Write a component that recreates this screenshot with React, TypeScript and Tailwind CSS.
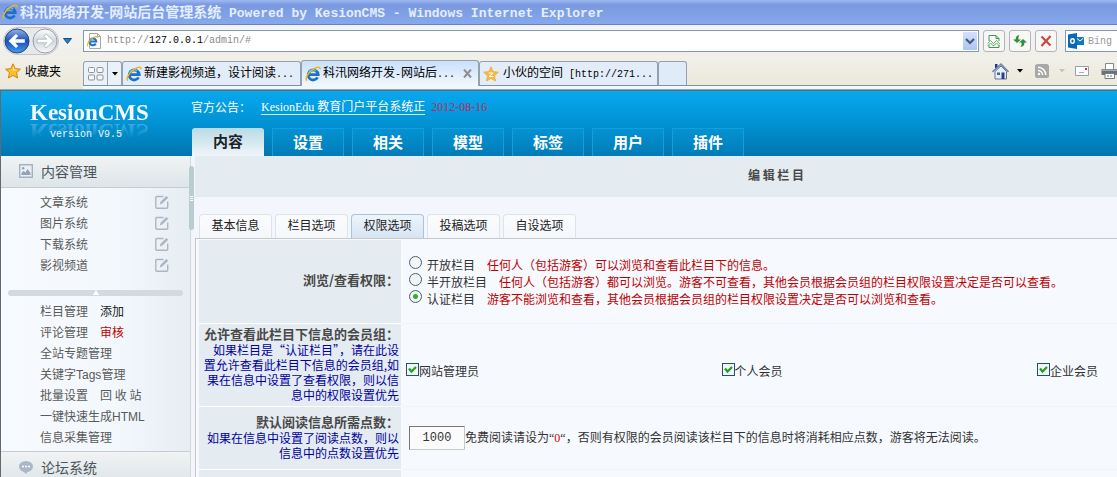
import { ReactNode } from "react";

const MONO = "font-['Liberation_Mono','Noto_Sans_CJK_SC',monospace]";
const SERIF = "font-['Liberation_Serif','Noto_Sans_CJK_SC',serif]";

const MAIN_TABS = ["内容", "设置", "相关", "模型", "标签", "用户", "插件"];
const SUB_TABS = ["基本信息", "栏目选项", "权限选项", "投稿选项", "自设选项"];
const CHANNELS = ["文章系统", "图片系统", "下载系统", "影视频道"];
const GROUPS = ["网站管理员", "个人会员", "企业会员"];

const ACCESS_OPTIONS = [
  { label: "开放栏目", hint: "任何人（包括游客）可以浏览和查看此栏目下的信息。" },
  { label: "半开放栏目", hint: "任何人（包括游客）都可以浏览。游客不可查看，其他会员根据会员组的栏目权限设置决定是否可以查看。" },
  { label: "认证栏目", hint: "游客不能浏览和查看，其他会员根据会员组的栏目权限设置决定是否可以浏览和查看。" },
];

const IeIcon = () => (
  <svg viewBox="0 0 16 16" className="h-4 w-4 shrink-0" fill="none">
    <path d="M12.6 11.4A5 5 0 1 1 13.2 8.6H4.2" stroke="#1c72c8" strokeWidth="2.8" />
    <path d="M3.8 6.600A4.400 4.400 0 0 1 11 5" stroke="#6cc4f6" strokeWidth="1.2" />
    <path d="M2 14.6C-.6 12.6 3.4 6.6 8.2 3.4 12 .8 15.6.4 15 3.4" stroke="#f0b323" strokeWidth="1.5" />
  </svg>
);

const StarIcon = ({ pale = false }: { pale?: boolean }) => (
  <svg viewBox="0 0 16 16" className="h-4 w-4 shrink-0">
    <path
      d="M8 .8l2.2 4.8 5.2.6-3.9 3.5 1.1 5.3L8 12.4 3.4 15l1.1-5.3L.6 6.2l5.2-.6z"
      fill={pale ? "#f6b93c" : "#fbc02a"}
      stroke={pale ? "#eeb04a" : "#c9791a"}
      strokeWidth=".9"
      strokeLinejoin="round"
    />
    {pale ? <path d="M5.6 7h4.6L6 10.6h4.6" stroke="#fff" strokeWidth="1" fill="none" /> : <path d="M8 3l1.4 3.4 3 .4-4.4 1z" fill="#fff0a0" />}
  </svg>
);

const Caret = ({ color = "#000" }: { color?: string }) => (
  <svg viewBox="0 0 6 4" className="h-1 w-1.5 shrink-0"><path d="M0 0h6L3 3.4z" fill={color} /></svg>
);

const EditIcon = () => (
  <svg viewBox="0 0 14 14" className="h-3.5 w-3.5" fill="none">
    <path d="M8.5 1.5H1.8a1 1 0 0 0-1 1v9.7a1 1 0 0 0 1 1h9.9a1 1 0 0 0 1-1V6.4" stroke="#abb6c2" strokeWidth="1.4" />
    <path d="M4.8 9.4l.7-2.6L11.4.9l1.9 1.8-6 5.9z" fill="#abb6c2" />
  </svg>
);

const NavButton = ({ forward = false }: { forward?: boolean }) => (
  <button type="button" aria-label={forward ? "前进" : "后退"} className="h-[26px] w-[26px]">
    <svg viewBox="0 0 26 26" className={forward ? "h-[26px] w-[26px] -scale-x-100" : "h-[26px] w-[26px]"}>
      <defs>
        <linearGradient id={forward ? "fwd" : "back"} x1="0" y1="0" x2="0" y2="1">
          <stop offset="0" stopColor={forward ? "#fbfbfb" : "#8fb4e8"} />
          <stop offset=".5" stopColor={forward ? "#d3d9e0" : "#1d4fb4"} />
          <stop offset="1" stopColor={forward ? "#f5f8fb" : "#3f9ff0"} />
        </linearGradient>
      </defs>
      <circle cx="13" cy="13" r="12" fill={`url(#${forward ? "fwd" : "back"})`} stroke={forward ? "#969fab" : "#24457e"} />
      <path
        d="M4.500 13l7.500-7 2.200 2-3 3.200h9.600v3.600h-9.600l3 3.200-2.200 2z"
        fill="#fff"
        stroke={forward ? "#a9b2bd" : "none"}
        strokeWidth=".8"
      />
    </svg>
  </button>
);

const ToolButton = ({ label, children }: { label: string; children: ReactNode }) => (
  <button type="button" aria-label={label} className="flex h-[22px] w-[22px] shrink-0 items-center justify-center rounded-[3px] border border-[#b2b4b8] bg-[#f7f7f5]">
    {children}
  </button>
);

const TitleBar = () => (
  <div className="flex h-[25px] shrink-0 items-center gap-0.5 border-b border-[#6b7fc0] bg-linear-to-b from-[#9db9f0] via-[#7a98e0] via-20% to-[#86a8ec] pl-0.5 text-sm font-bold text-[#e3eeff]">
    <IeIcon />
    <h1 className="whitespace-nowrap leading-5">
      科汛网络开发-网站后台管理系统
      <span className={`${MONO} text-[13px]`}> Powered by KesionCMS - Windows Internet Explorer</span>
    </h1>
  </div>
);

const AddressBar = () => (
  <div className="flex h-8 shrink-0 items-center overflow-hidden bg-linear-to-b from-[#f2f4f5] to-[#f0efe8]">
    <div className="flex w-[83px] shrink-0 items-center pl-[3px]">
      <div className="flex gap-0.5 rounded-full border border-[#c3c6ca] bg-[#e6e8ea]">
        <NavButton />
        <NavButton forward />
      </div>
      <button type="button" aria-label="最近浏览的网页" className="ml-1">
        <svg viewBox="0 0 9 6" className="h-1.5 w-[9px]"><path d="M.5.5h8l-4 5z" fill="#1f7fc4" stroke="#1b4e86" /></svg>
      </button>
    </div>
    <div className="flex h-[22px] min-w-0 flex-1 items-center border border-[#7f9db0] bg-white pl-0.5">
      <svg viewBox="0 0 16 16" className="h-4 w-4 shrink-0" fill="none">
        <path d="M3.500.5h8l3 3v12h-11z" fill="#fdfdfd" stroke="#a8a8a0" />
        <path d="M11.500.5v3h3" stroke="#a8a8a0" />
        <path d="M9.800 10.600A3.400 3.400 0 1 1 10.300 8.600H4.500" stroke="#1c72c8" strokeWidth="2" />
        <path d="M1.800 13.200C.5 11.500 3.500 7 7 4.800 9.500 3.300 12 3 11.600 5" stroke="#f0b323" strokeWidth="1.200" />
      </svg>
      <label className={`${MONO} relative ml-[5px] min-w-0 flex-1 text-[10px] leading-4 text-[#8b8b8b]`}>
        http://<span className="text-black">127.0.0.1</span>/admin/#
        <input aria-label="地址" className="absolute inset-0 w-full opacity-0" />
      </label>
      <button type="button" aria-label="显示地址栏" className="mr-px flex h-[18px] w-[14px] items-center justify-center bg-linear-to-b from-[#d5e0fb] to-[#aec4f2]">
        <svg viewBox="0 0 10 7" className="h-[7px] w-2.5" fill="none"><path d="M1 1l4 4 4-4" stroke="#415c84" strokeWidth="2.2" /></svg>
      </button>
    </div>
    <div className="flex gap-1 px-1">
      <ToolButton label="兼容性视图">
        <svg viewBox="0 0 14 15" className="h-[15px] w-3.5" fill="none" stroke="#3f9a4a">
          <path d="M2 7V1.5h7l3 3V7M9 1.5v3h3M2 11v2.5h10V11" />
          <path d="M.5 9.500l3-3 3 3 3-3 3.500 3.500M.5 12l3-3 3 3 3-3 3 3" strokeWidth=".8" />
        </svg>
      </ToolButton>
      <ToolButton label="刷新">
        <svg viewBox="0 0 14 14" className="h-3.5 w-3.5" fill="#2f9138">
          <path d="M4 9L0 5.500h2.500Q2.500 1.500 6.500 1 5 3 5.500 5.500H8z" />
          <path d="M10 5l4 3.500h-2.500Q11.500 12.500 7.500 13 9 11 8.500 8.500H6z" />
        </svg>
      </ToolButton>
      <ToolButton label="停止">
        <svg viewBox="0 0 12 12" className="h-3 w-3" fill="none"><path d="M1.500 1.500l9 9M10.500 1l-9 10" stroke="#c84a45" strokeWidth="2.200" /></svg>
      </ToolButton>
    </div>
    <div className="ml-1 flex h-[22px] w-[52px] shrink-0 items-center gap-1 overflow-hidden border border-r-0 border-[#7f9db0] bg-white pl-0.5">
      <svg viewBox="0 0 16 16" className="h-4 w-4 shrink-0">
        <path d="M8 4h8v8H8z" fill="#1477c4" />
        <path d="M9 5.500l3 2.500 3.500-3" stroke="#fff" fill="none" />
        <path d="M0 1.500L9 0v16l-9-1.500z" fill="#0a68b4" />
        <ellipse cx="4.500" cy="8" rx="1.800" ry="2.300" stroke="#fff" strokeWidth="1.400" fill="none" />
      </svg>
      <label className={`${MONO} relative text-[10px] text-[#999]`}>
        Bing
        <input aria-label="搜索" className="absolute inset-0 w-full opacity-0" />
      </label>
    </div>
  </div>
);

const BrowserTabs = () => (
  <div className="flex h-[33px] shrink-0 items-end overflow-hidden border-b border-[#78aec6] bg-linear-to-b from-[#f1f0e9] to-[#ebe8d8] text-xs leading-4 text-black">
    <button type="button" className="flex w-[83px] shrink-0 items-center gap-1 self-center pb-1 pl-[5px]">
      <StarIcon />
      收藏夹
    </button>
    <div className="flex h-full min-w-0 flex-1 flex-col justify-end">
      <div className="flex items-end border-b border-[#82939c]">
        <div className="flex h-6 items-center rounded-t-[3px] border border-b-0 border-[#93a3ae] bg-[#eaf1f8]">
          <button type="button" aria-label="快速导航选项卡" className="flex h-full w-[23px] items-center justify-center">
            <svg viewBox="0 0 16 14" className="h-3.5 w-4" fill="#f8f8f8" stroke="#8b929c">
              <rect x=".5" y=".5" width="6" height="5" rx="1" /><rect x="9" y=".5" width="6" height="5" rx="1" />
              <rect x=".5" y="8" width="6" height="5" rx="1" /><rect x="9" y="8" width="6" height="5" rx="1" />
            </svg>
          </button>
          <button type="button" aria-label="选项卡列表" className="flex h-full w-[14px] items-center justify-center border-l border-[#93a3ae]">
            <Caret />
          </button>
        </div>
        <button type="button" className="flex h-6 w-[179px] items-center gap-0.5 whitespace-nowrap rounded-t-[3px] border border-b-0 border-[#93a3ae] bg-[#e3edf9] pl-[3px]">
          <IeIcon />
          <span>新建影视频道，设计阅读<span className={`${MONO} text-[10px]`}>...</span></span>
        </button>
        <div className="-mb-px flex h-[26px] w-[178px] items-center whitespace-nowrap rounded-t-[3px] border border-b-0 border-[#93a3ae] bg-linear-to-b from-[#c9e0fb] to-[#f3f8fd] pl-[3px] pr-1.5">
          <button type="button" className="flex flex-1 items-center gap-0.5">
            <IeIcon />
            <span>科汛网络开发<span className={`${MONO} text-[10px]`}>-</span>网站后<span className={`${MONO} text-[10px]`}>...</span></span>
          </button>
          <button type="button" aria-label="关闭选项卡">
            <svg viewBox="0 0 9 9" className="h-[9px] w-[9px]" fill="none"><path d="M1 .5l7 8M8 .5l-7 8" stroke="#8c8f94" strokeWidth="2" /></svg>
          </button>
        </div>
        <button type="button" className="flex h-6 w-[179px] items-center gap-1 whitespace-nowrap rounded-t-[3px] border border-b-0 border-[#93a3ae] bg-[#e3edf9] pl-[3px]">
          <StarIcon pale />
          <span>小伙的空间<span className={`${MONO} text-[10px]`}> [http://271...</span></span>
        </button>
        <button type="button" aria-label="新选项卡" className="h-6 w-[29px] rounded-t-[3px] border border-b-0 border-[#93a3ae] bg-[#dfebf8]" />
      </div>
      <div className="h-[3px] bg-[#f3f7fb]" />
    </div>
    <div className="flex h-full w-[125px] shrink-0 flex-col justify-end">
      <div className="flex h-[29px] items-center border-b border-[#82939c]">
        <button type="button" aria-label="主页">
          <svg viewBox="0 0 17 17" className="h-[17px] w-[17px]">
            <path d="M3 1h2.500v4H3z" fill="#24348f" />
            <path d="M3 8.500v7.500h11.500V8.500L9 3z" fill="#e8eef8" stroke="#64758f" />
            <path d="M.5 9L9 1.200 16.500 9" fill="none" stroke="#6a86b4" strokeWidth="1.600" />
            <path d="M5 9.500h3V12H5z" fill="#3568b0" /><path d="M9.500 9.500h3V16h-3z" fill="#27418a" />
          </svg>
        </button>
        <span className="ml-2"><Caret /></span>
        <button type="button" aria-label="源" className="ml-3">
          <svg viewBox="0 0 14 14" className="h-3.5 w-3.5" fill="none">
            <rect width="14" height="14" rx="2.500" fill="#a8a8a6" />
            <path d="M3 6.500A4.500 4.500 0 0 1 7.500 11M3 3.200A7.800 7.800 0 0 1 10.800 11" stroke="#fff" strokeWidth="1.500" />
            <circle cx="4" cy="10" r="1.200" fill="#fff" />
          </svg>
        </button>
        <span className="ml-2.5"><Caret color="#c4c4be" /></span>
        <button type="button" aria-label="阅读邮件" className="ml-2.5">
          <svg viewBox="0 0 14 10" className="h-2.5 w-3.5">
            <path d="M.5.5h13v9H.5z" fill="#fff" stroke="#9a9fb0" />
            <path d="M10 2h2v2h-2z" fill="#d03a4c" /><path d="M4 6.500h5" stroke="#c5a0a8" />
          </svg>
        </button>
        <button type="button" aria-label="打印" className="ml-3 shrink-0">
          <svg viewBox="0 0 18 16" className="h-4 w-[18px]">
            <path d="M4.500.5h8v6h-8z" fill="#fff" stroke="#888" />
            <path d="M.5 6h16.500v6H.5z" fill="#6d7076" /><path d="M1 6.500h15.500v1.500H1z" fill="#a6a9ae" />
            <path d="M4 10.500h9.500v5H4z" fill="#fff" stroke="#777" /><path d="M6 13h2m1 0h2" stroke="#2b82a8" />
          </svg>
        </button>
      </div>
      <div className="h-[3px] bg-[#f3f7fb]" />
    </div>
  </div>
);

const Header = () => (
  <header className="flex h-[65px] shrink-0 overflow-hidden bg-linear-to-b from-[#08a8ef] via-[#0192d4] via-50% to-[#0076ae] text-white">
    <div className="flex w-[190px] shrink-0 flex-col gap-0.5 pl-[29px] pt-2.5">
      <strong className={`${SERIF} w-fit text-[23px] leading-6 text-[#f2fbff] [-webkit-box-reflect:below_-6px_linear-gradient(transparent_20%,rgba(255,255,255,0.35))]`}>
        KesionCMS
      </strong>
      <span className={`${MONO} pl-5 text-[10px] leading-4 text-[#e6f8ff]`}>version V9.5</span>
    </div>
    <div className="flex min-w-0 flex-1 flex-col justify-between">
      <div className="flex gap-1.5 pt-2 text-xs leading-4">
        <span className="mr-1">官方公告：</span>
        <a href="#" className={`${SERIF} h-4 border-b border-white/80`}>KesionEdu 教育门户平台系统正</a>
        <time className={`${SERIF} text-[#b82c5c]`}>2012-08-16</time>
      </div>
      <nav className="ml-px flex gap-2">
        {MAIN_TABS.map((tab, i) => (
          <button
            key={tab}
            type="button"
            className={
              i === 0
                ? "h-7 w-[72px] rounded-t-[3px] bg-linear-to-b from-[#b9dbe5] to-[#f0f5fa] pb-0.5 text-[15px] font-bold leading-6 text-[#1d2429]"
                : "h-7 w-[72px] border border-b-0 border-[#12a0dc] bg-linear-to-b from-[#0592d2] to-[#007cb8] pb-0.5 text-[15px] font-bold leading-6 text-white"
            }
          >
            {tab}
          </button>
        ))}
      </nav>
    </div>
  </header>
);

const SideHead = ({ icon, children }: { icon: ReactNode; children: ReactNode }) => (
  <h2 className="flex h-8 shrink-0 items-center gap-2 border-b border-[#c6ccd0] bg-linear-to-b from-[#f1f3f4] to-[#dde5e8] pb-0.5 pl-[18px] text-sm leading-5 text-[#4c545b]">
    {icon}
    {children}
  </h2>
);

const Sidebar = () => (
  <aside className="flex w-[190px] shrink-0 flex-col border-r border-[#cfdbe0] bg-linear-to-r from-[#f7faff] via-[#f3f8fd] via-60% to-[#e6edf3]">
    <SideHead
      icon={
        <svg viewBox="0 0 14 14" className="h-3.5 w-3.5" fill="none">
          <path d="M.7.7h12.600v12.600H.7z" stroke="#a3b2c2" strokeWidth="1.400" fill="#e9eff4" />
          <path d="M2.500 11V9l2-2 2 1.500L8.500 5l3 4v2z" fill="#8fa2b6" /><circle cx="4.200" cy="4.200" r="1.200" fill="#8fa2b6" />
        </svg>
      }
    >
      内容管理
    </SideHead>
    <ul className="pl-[39px] pr-[21px] pt-[3px] text-xs leading-[21px] text-[#5a5a5a]">
      {CHANNELS.map((name) => (
        <li key={name} className="flex h-[21px] items-center justify-between">
          <a href="#">{name}</a>
          <button type="button" aria-label={`编辑${name}`}><EditIcon /></button>
        </li>
      ))}
    </ul>
    <div className="mx-[7px] mb-1 mt-[15px] flex h-1.5 shrink-0 justify-center rounded-sm bg-[#d3d9de]">
      <svg viewBox="0 0 6 5" className="h-[5px] w-1.5"><path d="M3 0l3 5H0z" fill="#fff" /></svg>
    </div>
    <ul className="pb-1 pl-[39px] text-xs leading-[21px] text-[#5a5a5a]">
      <li className="flex h-[21px] gap-3"><a href="#">栏目管理</a><a href="#" className="text-[#222]">添加</a></li>
      <li className="flex h-[21px] gap-3"><a href="#">评论管理</a><a href="#" className="text-[#c00000]">审核</a></li>
      <li className="h-[21px]"><a href="#">全站专题管理</a></li>
      <li className="h-[21px]"><a href="#">关键字<span className="font-['Liberation_Sans',sans-serif]">Tags</span>管理</a></li>
      <li className="flex h-[21px] gap-3"><a href="#">批量设置</a><a href="#">回 收 站</a></li>
      <li className="h-[21px]"><a href="#">一键快速生成<span className="font-['Liberation_Sans',sans-serif]">HTML</span></a></li>
      <li className="h-[21px]"><a href="#">信息采集管理</a></li>
    </ul>
    <div className="border-t border-[#c6ccd0]">
      <SideHead
        icon={
          <svg viewBox="0 0 14 14" className="h-3.5 w-3.5" fill="#a9b7c6">
            <ellipse cx="7" cy="6.500" rx="7" ry="5.500" /><path d="M4 11l3 3 2-3z" />
            <circle cx="4" cy="6.500" r="1" fill="#fff" /><circle cx="7" cy="6.500" r="1" fill="#fff" /><circle cx="10" cy="6.500" r="1" fill="#fff" />
          </svg>
        }
      >
        论坛系统
      </SideHead>
    </div>
  </aside>
);

const FieldLabel = ({ title, children }: { title: string; children?: ReactNode }) => (
  <th scope="row" className="w-[202px] border-b border-white bg-[#e4ebf1] pb-0.5 pr-0.5 text-right align-middle text-xs font-normal leading-[15px] text-[#0000a0]">
    <span className="block text-[13px] font-bold leading-4 text-[#484848]">{title}</span>
    {children}
  </th>
);

const PermissionForm = () => (
  <table className="w-full border-collapse text-xs text-[#333]">
    <tbody>
      <tr className="h-[83px]">
        <FieldLabel title="浏览/查看权限：" />
        <td className="border-b border-[#f0f4f9] pl-2">
          {ACCESS_OPTIONS.map(({ label, hint }, i) => (
            <label key={label} className="flex h-[17px] items-center whitespace-nowrap leading-[17px]">
              <input
                type="radio"
                name="access"
                defaultChecked={i === 2}
                className="mb-1 mr-[5px] h-[13px] w-[13px] shrink-0 appearance-none rounded-full border border-[#3c6288] bg-[#f4f4f1] checked:bg-[radial-gradient(circle,#2fae2f_0_2px,#f4f4f1_3px)]"
              />
              {label}
              <span className="ml-3 text-[#c00000]">{hint}</span>
            </label>
          ))}
        </td>
      </tr>
      <tr className="h-[83px]">
        <FieldLabel title="允许查看此栏目下信息的会员组：">
          如果栏目是“认证栏目”，请在此设
          <br />
          置允许查看此栏目下信息的会员组,如
          <br />
          果在信息中设置了查看权限，则以信
          <br />
          息中的权限设置优先
        </FieldLabel>
        <td className="border-b border-[#f0f4f9] pl-[5px] pt-3">
          <div className="grid grid-cols-[1fr_1fr_80px]">
            {GROUPS.map((group) => (
              <label key={group} className="flex items-center whitespace-nowrap leading-4">
                <span className="mb-0.5 grid h-[13px] w-[13px] shrink-0">
                  <input type="checkbox" defaultChecked className="peer col-start-1 row-start-1 h-[13px] w-[13px] appearance-none border border-[#1c5180] bg-[#f4f5f2]" />
                  <svg viewBox="0 0 13 13" className="pointer-events-none invisible col-start-1 row-start-1 h-[13px] w-[13px] peer-checked:visible" fill="none">
                    <path d="M3 5.500l2.500 3L10 4" stroke="#21a121" strokeWidth="2.200" />
                  </svg>
                </span>
                {group}
              </label>
            ))}
          </div>
        </td>
      </tr>
      <tr className="h-[63px]">
        <FieldLabel title="默认阅读信息所需点数：">
          如果在信息中设置了阅读点数，则以
          <br />
          信息中的点数设置优先
        </FieldLabel>
        <td className="border-b border-[#f0f4f9] pl-2">
          <div className="flex items-center whitespace-nowrap leading-4">
            <input
              type="text"
              aria-label="默认阅读信息所需点数"
              defaultValue="1000"
              className={`${MONO} h-6 w-14 border border-b-[#c8c8c8] border-l-[#777] border-r-[#c8c8c8] border-t-[#777] bg-[#fbfbfb] text-center text-xs`}
            />
            <span>
              免费阅读请设为<span className={SERIF}>“<span className="text-[#d00000]">0</span>“</span>，否则有权限的会员阅读该栏目下的信息时将消耗相应点数，游客将无法阅读。
            </span>
          </div>
        </td>
      </tr>
      <tr className="h-10">
        <th scope="row" aria-label="其他" className="bg-[#e4ebf1]" />
        <td />
      </tr>
    </tbody>
  </table>
);

const App = () => (
  <div lang="zh-CN" className="flex h-screen flex-col overflow-hidden font-['Noto_Sans_CJK_SC','Liberation_Sans',sans-serif]">
    <TitleBar />
    <AddressBar />
    <BrowserTabs />
    <div className="flex min-h-0 flex-1 flex-col border-l border-t border-[#5f6b70]">
      <Header />
      <div className="flex min-h-0 flex-1">
        <Sidebar />
        <div className="w-1 shrink-0 bg-[#f2f6fa] pt-2.5">
          <div className="-ml-0.5 flex h-16 w-[5px] flex-col items-center justify-center gap-px rounded-sm bg-[#b9cdd0]">
            <i className="h-px w-[3px] bg-white" />
            <i className="h-px w-[3px] bg-white" />
            <i className="h-px w-[3px] bg-white" />
          </div>
        </div>
        <main className="flex min-w-0 flex-1 flex-col bg-[#f3f7fd]">
          <h2 className="h-[41px] shrink-0 bg-[#e4ebf1] pl-60 text-center text-xs font-bold leading-[38px] text-[#484848]">编 辑 栏 目</h2>
          <nav className="flex gap-[3px] pl-1 pt-[17px]">
            {SUB_TABS.map((tab) => (
              <button
                key={tab}
                type="button"
                className={
                  tab === "权限选项"
                    ? "h-6 w-[73px] rounded-t-sm border border-b-0 border-[#a9c3dc] bg-linear-to-b from-[#eef4fb] to-[#d6e4f3] pb-1 text-xs leading-5 text-[#222]"
                    : "h-6 w-[73px] rounded-t-sm border border-b-0 border-[#dfe3e8] bg-linear-to-b from-[#fbfcfe] to-[#f4f7fb] pb-1 text-xs leading-5 text-[#222]"
                }
              >
                {tab}
              </button>
            ))}
          </nav>
          <div className="min-h-0 flex-1 overflow-hidden border-l border-t border-[#c4c6c8] bg-[#f6f9fe] pl-[3px] pt-px">
            <PermissionForm />
          </div>
        </main>
      </div>
    </div>
  </div>
);

export default App;
